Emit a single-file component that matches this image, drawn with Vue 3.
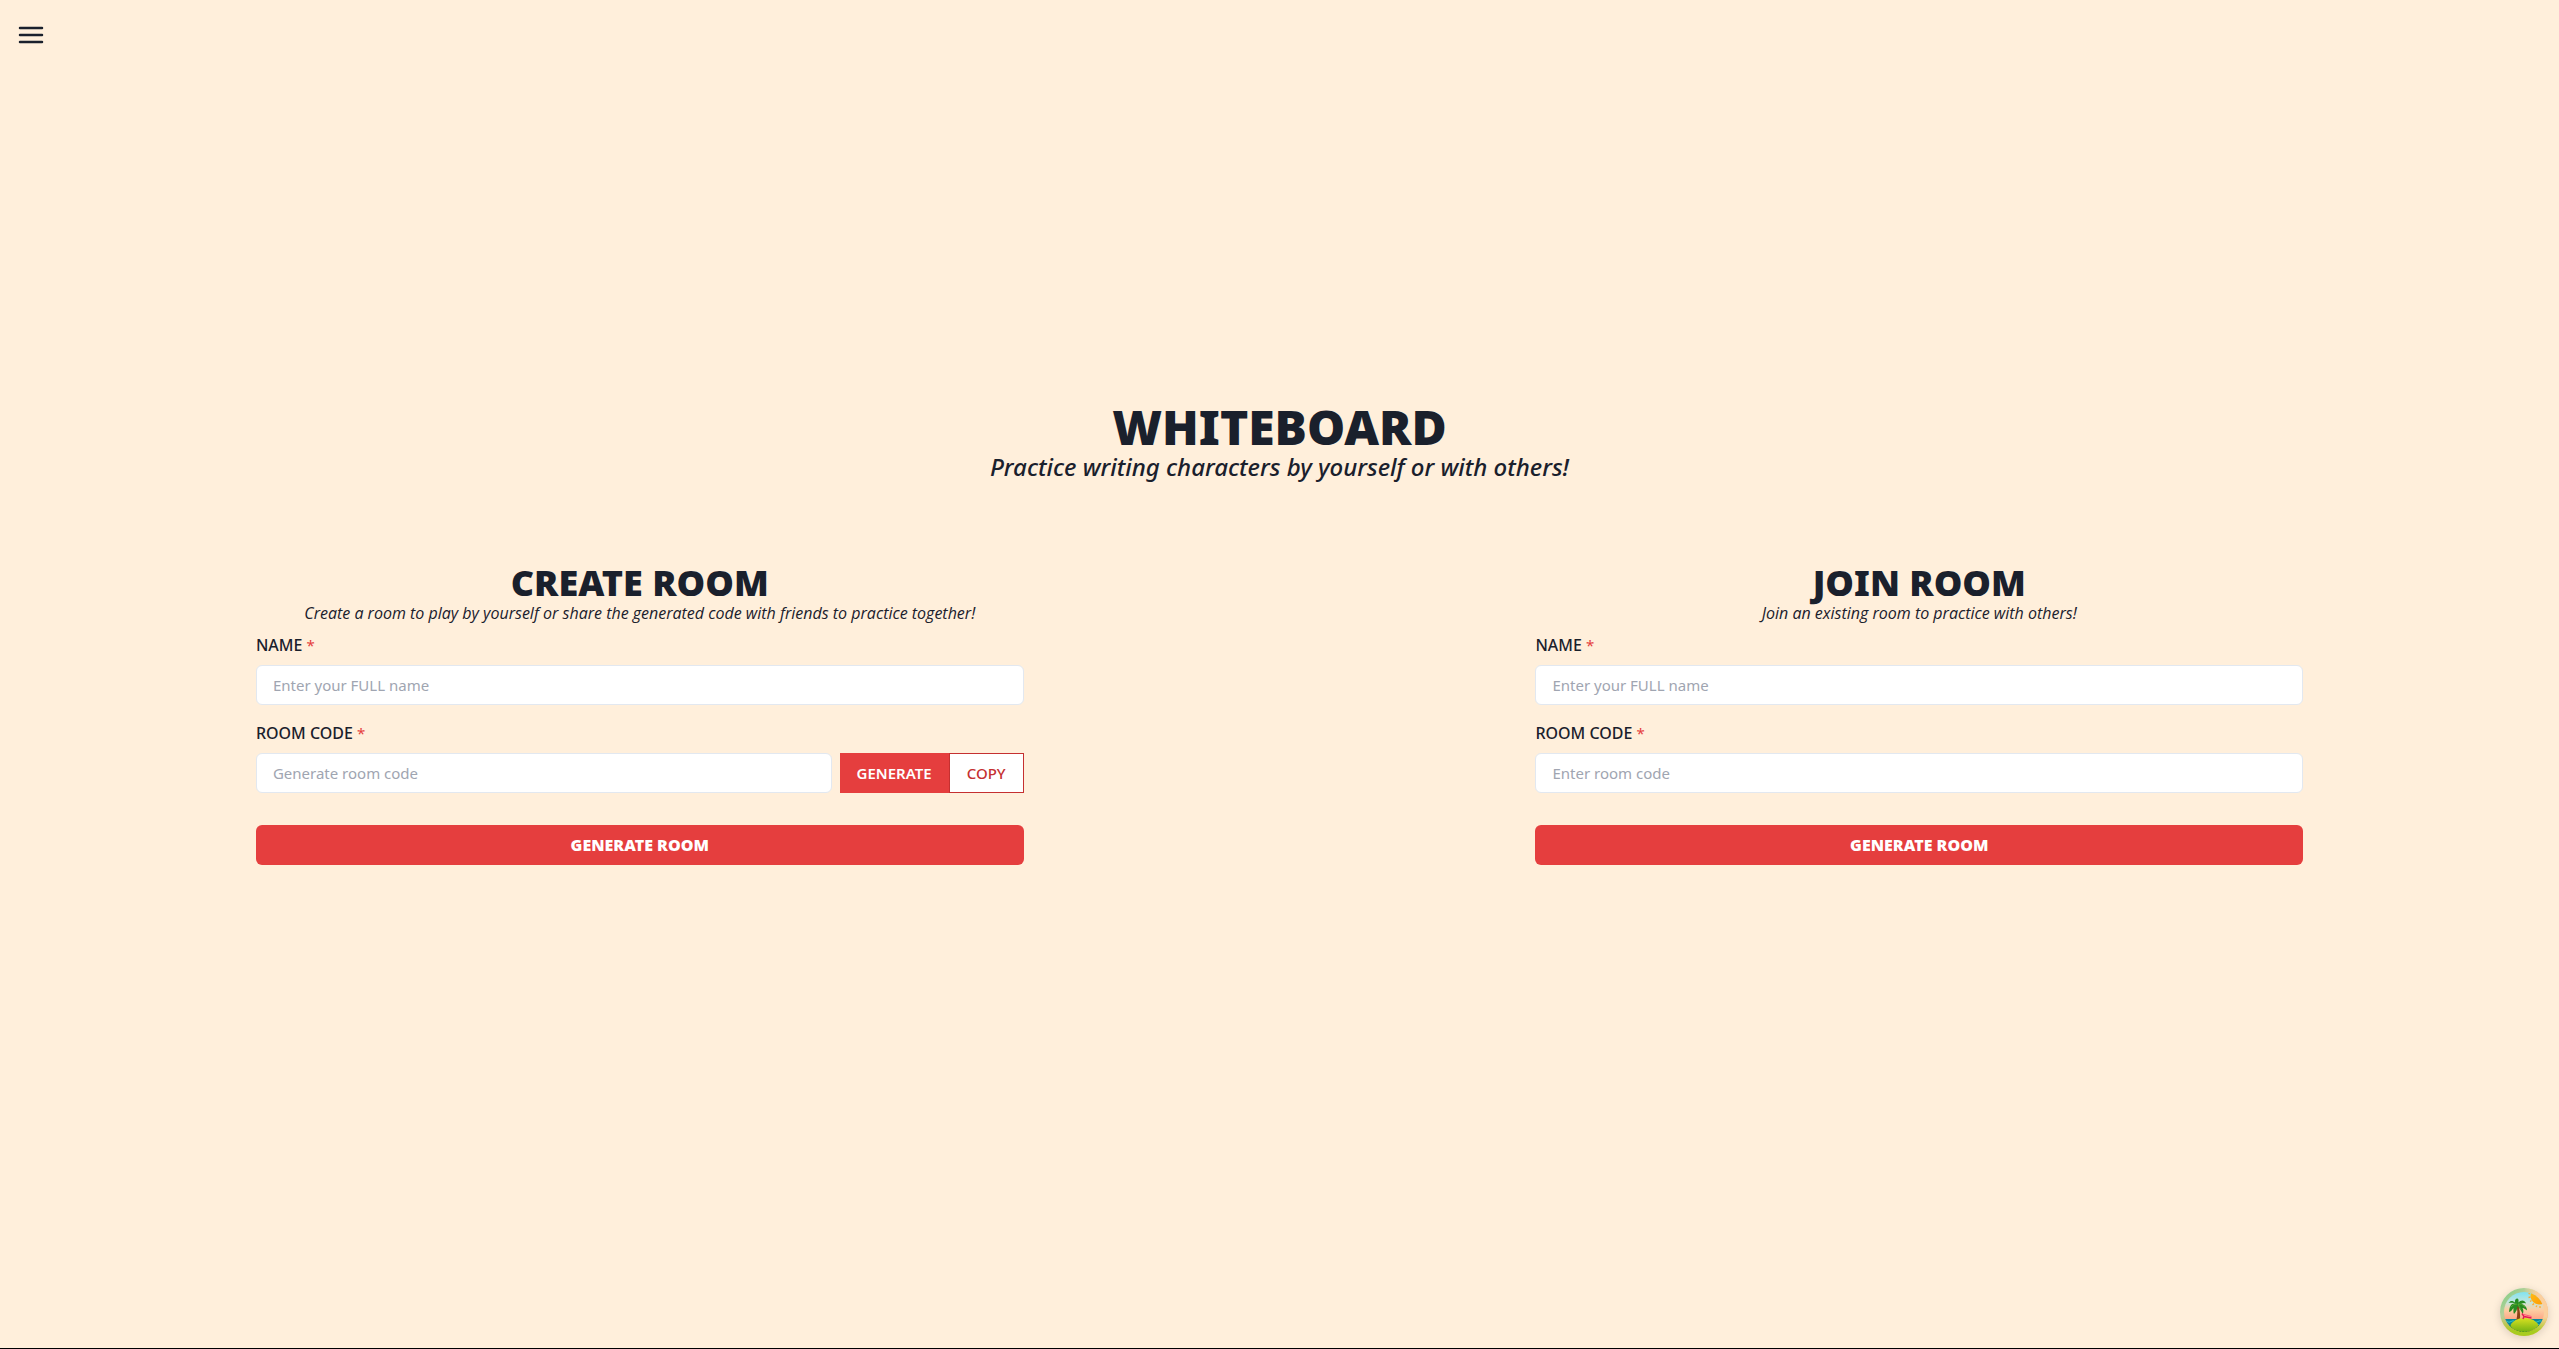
<script setup>
import { ref } from 'vue'

const rooms = [
  {
    id: 'create',
    title: 'CREATE ROOM',
    text: 'Create a room to play by yourself or share the generated code with friends to practice together!',
    placeholder: 'Generate room code',
    tools: true,
  },
  {
    id: 'join',
    title: 'JOIN ROOM',
    text: 'Join an existing room to practice with others!',
    placeholder: 'Enter room code',
    tools: false,
  },
]

const form = ref({
  create: { name: '', code: '' },
  join: { name: '', code: '' },
})
</script>

<template>
  <div class="page">
    <button class="menu" type="button" aria-label="Open menu">
      <svg viewBox="0 0 28 28" width="28" height="28" fill="none" stroke="currentColor" stroke-width="2.500" stroke-linecap="round">
        <path d="M3 7h22M3 14h22M3 21h22" />
      </svg>
    </button>

    <main class="content">
      <header class="hero">
        <h1>WHITEBOARD</h1>
        <p>Practice writing characters by yourself or with others!</p>
      </header>

      <div class="rooms">
        <form v-for="room in rooms" :key="room.id" class="room" @submit.prevent>
          <h2>{{ room.title }}</h2>
          <p class="intro">{{ room.text }}</p>

          <div class="field">
            <label :for="room.id + '-name'">NAME <span class="star">*</span></label>
            <input :id="room.id + '-name'" v-model="form[room.id].name" type="text" placeholder="Enter your FULL name" />
          </div>

          <div class="field">
            <label :for="room.id + '-code'">ROOM CODE <span class="star">*</span></label>
            <div class="row">
              <input :id="room.id + '-code'" v-model="form[room.id].code" type="text" :placeholder="room.placeholder" />
              <div v-if="room.tools" class="tools">
                <button class="generate" type="button">GENERATE</button>
                <button class="copy" type="button">COPY</button>
              </div>
            </div>
          </div>

          <button class="submit" type="submit">GENERATE ROOM</button>
        </form>
      </div>
    </main>

    <button class="devtools" type="button" aria-label="Open query devtools">
      <svg viewBox="0 0 48 48" width="48" height="48">
        <defs>
          <linearGradient id="ring" x1="0" y1="0" x2="1" y2="1">
            <stop offset="0" stop-color="#6fce7c" />
            <stop offset="0.3" stop-color="#b5cf9a" />
            <stop offset="0.6" stop-color="#f0b27c" />
            <stop offset="1" stop-color="#e3b04e" />
          </linearGradient>
          <linearGradient id="ringLow" x1="0" y1="0" x2="0" y2="1">
            <stop offset="0.6" stop-color="#a8cc20" stop-opacity="0" />
            <stop offset="0.9" stop-color="#a8cc20" />
          </linearGradient>
          <linearGradient id="ringTop" x1="0" y1="0" x2="1" y2="0">
            <stop offset="0.5" stop-color="#fbd9a8" stop-opacity="0" />
            <stop offset="0.8" stop-color="#fbcf9d" />
          </linearGradient>
          <linearGradient id="sky" x1="0" y1="0" x2="0" y2="1">
            <stop offset="0.08" stop-color="#7fe3f2" />
            <stop offset="0.3" stop-color="#c5e6dc" />
            <stop offset="0.45" stop-color="#fccfa4" />
            <stop offset="0.75" stop-color="#ff9478" />
          </linearGradient>
          <linearGradient id="sun" x1="0" y1="0" x2="1" y2="1">
            <stop offset="0" stop-color="#ffc21a" />
            <stop offset="1" stop-color="#ff9500" />
          </linearGradient>
          <linearGradient id="sand" x1="0" y1="0" x2="0" y2="1">
            <stop offset="0" stop-color="#d9e021" />
            <stop offset="1" stop-color="#6fb012" />
          </linearGradient>
          <clipPath id="scene"><circle cx="24" cy="24" r="20" /></clipPath>
        </defs>
        <circle cx="24" cy="24" r="24" fill="url(#ring)" />
        <circle cx="24" cy="24" r="24" fill="url(#ringTop)" />
        <circle cx="24" cy="24" r="24" fill="url(#ringLow)" />
        <g clip-path="url(#scene)">
          <rect width="48" height="48" fill="url(#sky)" />
          <circle cx="39" cy="8" r="8.500" fill="url(#sun)" />
          <path d="M28.5 5.500 30 6M28.500 9.500 30.500 9M30 13.500 31.500 12.500M32.500 17 34 15.500M36 19 37 17.500M40 20 40 18" stroke="#ffa82e" stroke-width="1.300" />
          <path d="M0 31h48v9H0z" fill="#07889b" />
          <path d="M3 33.500q2-1.500 4 0t4 0 4 0M30 33.500q2-1.500 4 0t4 0 4 0 4 0M34 36.500q2-1.500 4 0t4 0" stroke="#33c3c7" stroke-width="1" fill="none" />
          <path d="M17.500 14.500C19.500 20 20.500 25 20 33h-3.800c1.600-7 1.500-12-.2-17z" fill="#8a4217" />
          <path d="M10 38Q14 30 24.500 30T39 38Q35 44.500 24.500 44.500T10 38z" fill="url(#sand)" />
          <path d="M10 37q3 7 14.500 7T39 37" fill="none" stroke="#2d8a27" stroke-width="1" stroke-dasharray="1.500 1.500" />
          <path d="M17 16C12 14 9.500 17 9 24c2 0 3.500-3 4.500-4 0 2-.5 4 .500 6 2-2 3.500-5 3.500-8 2 2 4 5 5 8 1.500-2 .8-4.500 0-6 1.500 0 3.500 1.500 4.500 2.500 0-4-3.500-6.500-6-6.500 2-1 3.500-1.500 5-.5-1.500-4-5.500-3.500-7.500-1 0-2 .5-3-1-4-2 0-3 2-2.500 4-2-2-4.500-2.500-6.500.5 2.500-.5 5-.5 8 1z" fill="#278b22" />
          <path d="M11 19q2-3 6-3M18 16q4-1 7 3M18 16l3 6" stroke="#65ad35" fill="none" stroke-width=".8" />
          <path d="M22 25.500 24 28.500 31.500 30M24 28.500 23 31" stroke="#e31c55" stroke-width="1.500" fill="none" />
          <path d="M24 26.500 31.500 28.500" stroke="#ff5277" stroke-width="1" />
        </g>
      </svg>
    </button>
  </div>
</template>

<style>
body {
  margin: 0;
}
</style>

<style scoped>
.page {
  box-sizing: border-box;
  min-height: 100vh;
  display: flex;
  flex-direction: column;
  justify-content: center;
  padding-bottom: 80px;
  background: #ffefdb;
  border-bottom: 1px solid #000;
  color: #1a202c;
  font-family: "Segoe UI", "Noto Sans", sans-serif;
  font-size: 16px;
  line-height: 24px;
}

h1,
h2,
p {
  margin: 0;
  text-align: center;
}

button,
input {
  box-sizing: border-box;
  height: 40px;
  margin: 0;
  font: inherit;
}

button {
  border: 0;
  cursor: pointer;
}

.menu {
  position: fixed;
  top: 15px;
  left: 12px;
  padding: 5px;
  background: none;
  color: inherit;
}

.menu svg,
.devtools svg {
  display: block;
}

h1,
h2,
.submit {
  font-weight: 900;
}

.hero h1 {
  font-size: 48px;
  line-height: 48px;
}

.hero p {
  font-size: 24px;
  font-style: italic;
  font-weight: 500;
  line-height: 32px;
}

.rooms {
  display: flex;
  justify-content: space-around;
  margin-top: 82px;
}

.room {
  display: flex;
  flex-direction: column;
  width: 30%;
}

.room h2 {
  font-size: 36px;
  line-height: 36px;
}

.intro {
  font-family: "Segoe UI", "Open Sans", sans-serif;
  font-style: italic;
  white-space: nowrap;
}

.field {
  display: flex;
  flex-direction: column;
  margin-top: 8px;
}

.field + .field {
  margin-top: 16px;
}

label {
  margin-bottom: 8px;
  font-size: 16px;
  font-weight: 500;
}

.star {
  color: #e53e3e;
  font-size: 15px;
  font-weight: 400;
}

input {
  width: 100%;
  min-width: 0;
  padding: 0 16px;
  border: 1px solid #e2e8f0;
  border-radius: 6px;
  background: #fff;
  color: inherit;
  font-size: 15px;
}

input::placeholder {
  color: #a0a5b1;
  opacity: 1;
}

.row {
  display: flex;
  gap: 8px;
}

.tools {
  display: flex;
}

.tools button {
  padding: 0 17px;
  font-size: 15px;
}

.generate,
.submit {
  background: #e53e3e;
  color: #fff;
}

.generate {
  font-weight: 600;
}

.copy {
  border: 1px solid #c53030;
  background: #fff;
  color: #c53030;
  font-weight: 500;
}

.submit {
  margin-top: 32px;
  border-radius: 6px;
}

.devtools {
  position: fixed;
  right: 11px;
  bottom: 13px;
  width: 48px;
  height: 48px;
  padding: 0;
  border-radius: 50%;
  background: none;
  box-shadow: 0 2px 8px rgba(0, 0, 0, 0.15);
}
</style>
